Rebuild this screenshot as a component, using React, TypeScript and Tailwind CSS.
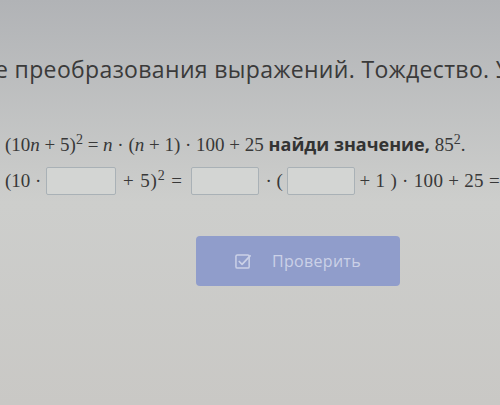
import React from "react";

const mathFont = { fontFamily: '"Liberation Serif", "DejaVu Serif", serif' };

function M({ children }: { children: React.ReactNode }) {
  return <span style={mathFont}>{children}</span>;
}

function I({ children }: { children: React.ReactNode }) {
  return <span className="italic">{children}</span>;
}

function Box({ w }: { w: string }) {
  return (
    <span
      className={`inline-block h-[28px] ${w} rounded-[2px] border border-[#a9b1b6] bg-[#d3d5d3] align-middle`}
    />
  );
}

function CheckSquareIcon() {
  return (
    <svg aria-hidden viewBox="0 0 18 18" fill="none" className="size-[17px]">
      <rect x="1" y="2" width="14" height="14" rx="1.5" stroke="currentColor" strokeWidth="1.6" />
      <path d="M4.5 9l3 3L16 3" stroke="currentColor" strokeWidth="1.8" strokeLinecap="round" strokeLinejoin="round" />
    </svg>
  );
}

export default function App() {
  return (
    <div
      className="h-[405px] w-[500px] overflow-hidden bg-gradient-to-b from-[#b1b3b6] via-[#cdcecc] to-[#c9c8c5] text-[#383838]"
      style={{ fontFamily: '"Open Sans", "Noto Sans", sans-serif' }}
    >
      <div className="pt-[53px] whitespace-nowrap">
        <h1 className="-ml-[5px] text-[23px] leading-[32px] font-normal tracking-[0.35px] text-[#3a3a3a]">
          е преобразования выражений. Тождество. У
        </h1>
      </div>

      <div className="mt-[46px] ml-[5px] whitespace-nowrap text-[19px] leading-[26px]">
        <M>
          (10<I>n</I> + 5)<sup className="text-[14px]">2</sup> = <I>n</I> · (<I>n</I> + 1) · 100 + 25{" "}
        </M>
        <span className="text-[18px] font-bold text-[#333]">найди значение,</span>{" "}
        <M>
          85<sup className="text-[14px]">2</sup>.
        </M>
      </div>

      <div className="mt-[9px] ml-[5px] flex items-center whitespace-nowrap text-[19px] leading-[28px]" style={mathFont}>
        <span className="mr-[5px]">(10 ·</span>
        <Box w="w-[73px]" />
        <span className="mr-[8px] ml-[7px] tracking-[0.9px]">
          + 5)<sup className="text-[14px]">2</sup> =
        </span>
        <Box w="w-[71px]" />
        <span className="mr-[4px] ml-[7px]">· (</span>
        <Box w="w-[71px]" />
        <span className="ml-[5px] tracking-[0.3px]">+ 1 ) · 100 + 25 =</span>
      </div>

      <div className="mt-[41px] flex">
        <button
          type="button"
          className="ml-[196px] flex h-[50px] w-[204px] items-center justify-center gap-[20px] rounded-[4px] bg-[#909dcb] text-[16px] text-[#cbd1e7]"
        >
          <CheckSquareIcon />
          <span className="tracking-[0.3px]">Проверить</span>
        </button>
      </div>
    </div>
  );
}
